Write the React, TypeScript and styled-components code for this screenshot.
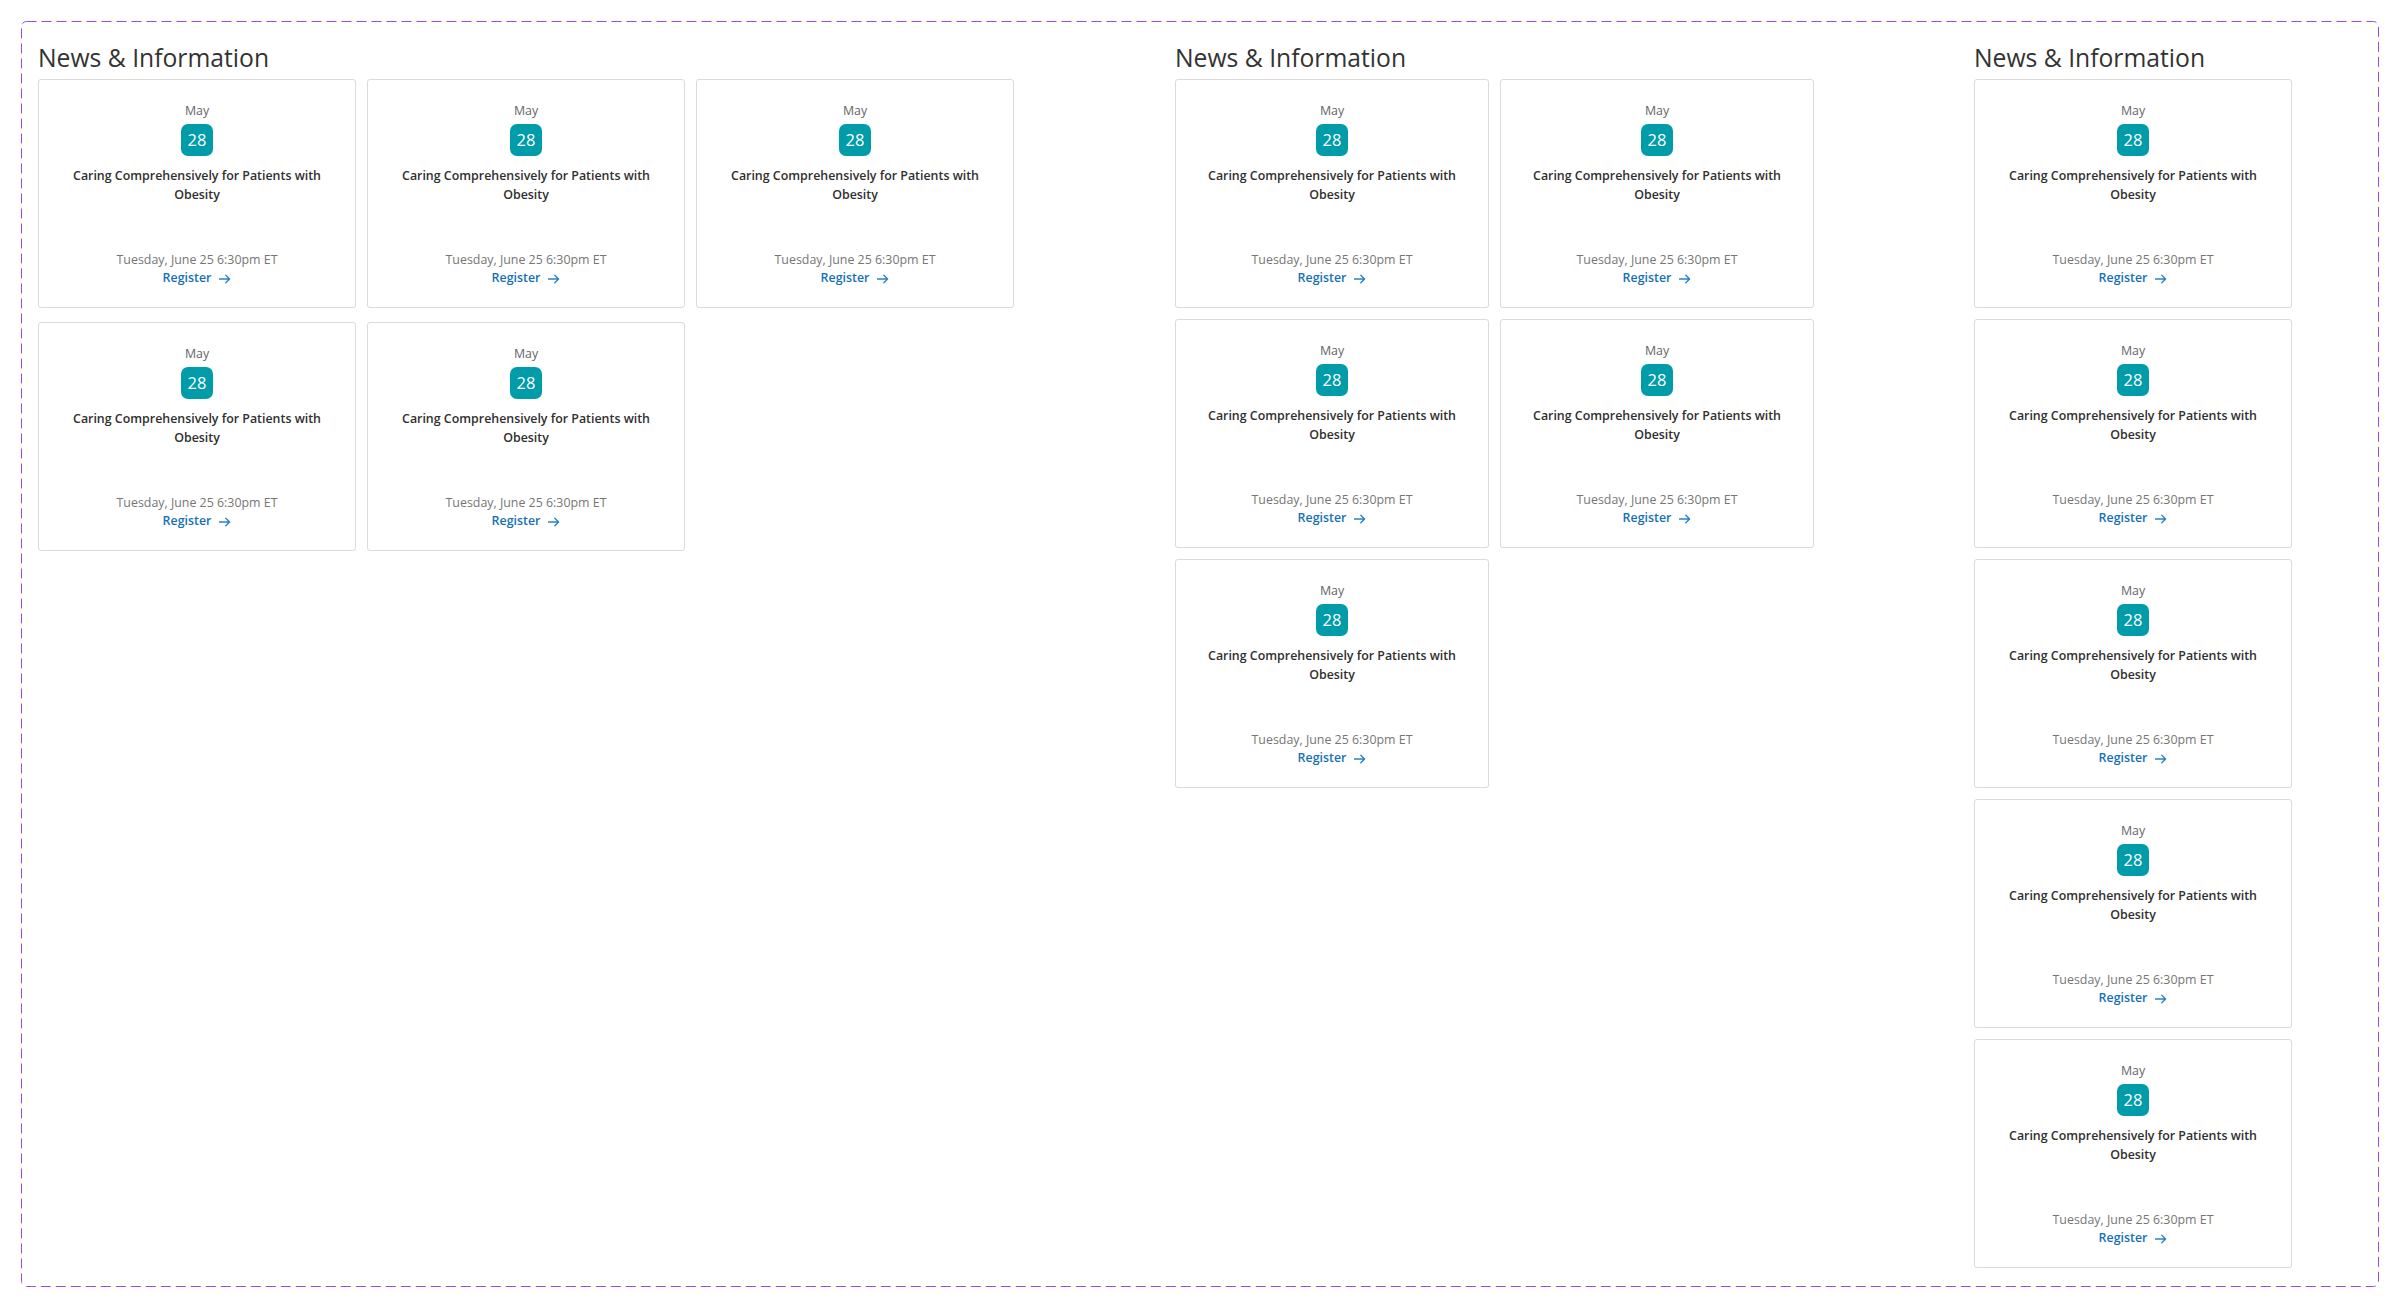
import React from "react";
import styled, { createGlobalStyle } from "styled-components";

interface IEvent {
  id: number;
  month: string;
  day: string;
  title: string;
  when: string;
}

interface ISection {
  id: string;
  width: number;
  cols: number;
  colWidth: number;
  colGap: number;
  rowGap: number;
  count: number;
}

const makeEvents = (count: number): IEvent[] =>
  Array.from({ length: count }, (_, i) => ({
    id: i,
    month: "May",
    day: "28",
    title: "Caring Comprehensively for Patients with Obesity",
    when: "Tuesday, June 25 6:30pm ET",
  }));

// three breakpoints of the same block, side by side
const sections: ISection[] = [
  { id: "desktop", width: 1137, cols: 3, colWidth: 318, colGap: 11, rowGap: 14, count: 5 },
  { id: "tablet", width: 799, cols: 2, colWidth: 314, colGap: 11, rowGap: 11, count: 5 },
  { id: "mobile", width: 318, cols: 1, colWidth: 318, colGap: 0, rowGap: 11, count: 5 },
];

const ArrowIcon = () => (
  <svg width="12" height="10" viewBox="0 0 12 10" fill="none">
    <path
      d="M0.5 5H10.5M6.8 1.2L10.6 5L6.8 8.8"
      stroke="currentColor"
      strokeWidth="1.3"
      strokeLinecap="round"
      strokeLinejoin="round"
    />
  </svg>
);

const EventCard = ({ event }: { event: IEvent }) => (
  <Card>
    <Month>{event.month}</Month>
    <DayBadge>{event.day}</DayBadge>
    <Title>{event.title}</Title>
    <Footer>
      <When>{event.when}</When>
      <RegisterLink href="#">
        Register
        <ArrowIcon />
      </RegisterLink>
    </Footer>
  </Card>
);

const App = () => {
  return (
    <>
      <GlobalStyle />
      <Page>
        <Frame>
          <DashedOutline aria-hidden="true">
            <rect x="0.5" y="0.5" rx="5" ry="5" />
          </DashedOutline>
          {sections.map((section) => (
            <Section key={section.id} $width={section.width}>
              <Heading>News &amp; Information</Heading>
              <CardGrid
                $cols={section.cols}
                $colWidth={section.colWidth}
                $colGap={section.colGap}
                $rowGap={section.rowGap}
              >
                {makeEvents(section.count).map((event) => (
                  <EventCard key={event.id} event={event} />
                ))}
              </CardGrid>
            </Section>
          ))}
        </Frame>
      </Page>
    </>
  );
};

const GlobalStyle = createGlobalStyle`
  html, body {
    margin: 0;
    background: #ffffff;
  }

  body {
    font-family: "Open Sans", "Noto Sans", Arial, sans-serif;
    -webkit-font-smoothing: antialiased;
  }
`;

export const Page = styled.div`
  padding: 21px;
`;

export const Frame = styled.div`
  position: relative;
  box-sizing: border-box;
  width: 2358px;
  height: 1266px;
  padding: 21px 17px;
  display: flex;
  align-items: flex-start;
`;

export const DashedOutline = styled.svg`
  position: absolute;
  inset: 0;
  width: 100%;
  height: 100%;
  pointer-events: none;

  rect {
    width: calc(100% - 1px);
    height: calc(100% - 1px);
    fill: none;
    stroke: #9747ff;
    stroke-width: 1;
    stroke-dasharray: 10 5;
  }
`;

export const Section = styled.section<{ $width: number }>`
  flex: 0 0 ${(props) => props.$width}px;
`;

export const Heading = styled.h2`
  margin: 0 0 5px;
  font-size: 24.7px;
  line-height: 32px;
  font-weight: 400;
  color: #333333;
  white-space: nowrap;
`;

export const CardGrid = styled.div<{
  $cols: number;
  $colWidth: number;
  $colGap: number;
  $rowGap: number;
}>`
  display: grid;
  grid-template-columns: repeat(${(props) => props.$cols}, ${(props) => props.$colWidth}px);
  column-gap: ${(props) => props.$colGap}px;
  row-gap: ${(props) => props.$rowGap}px;
`;

export const Card = styled.article`
  box-sizing: border-box;
  height: 229px;
  padding: 22px 14px 20px;
  border: 1px solid #dcdadb;
  border-radius: 3px;
  background: #ffffff;
  display: flex;
  flex-direction: column;
  align-items: center;
  text-align: center;
`;

export const Month = styled.div`
  font-size: 12.4px;
  line-height: 18px;
  color: #666666;
`;

export const DayBadge = styled.div`
  margin-top: 4px;
  width: 32px;
  height: 32px;
  border-radius: 7px;
  background: #009ca9;
  color: #ffffff;
  font-size: 16.5px;
  line-height: 32px;
  text-align: center;
`;

export const Title = styled.h3`
  margin: 11px 0 0;
  font-size: 12.4px;
  line-height: 18.5px;
  font-weight: 600;
  color: #2f2f2f;
`;

export const Footer = styled.div`
  margin-top: auto;
  display: flex;
  flex-direction: column;
  align-items: center;
`;

export const When = styled.div`
  font-size: 12.4px;
  line-height: 18px;
  color: #767676;
`;

export const RegisterLink = styled.a`
  display: inline-flex;
  align-items: center;
  gap: 8px;
  font-size: 12.4px;
  line-height: 18px;
  font-weight: 600;
  color: #1570b5;
  text-decoration: none;

  svg {
    color: #2a82c4;
    margin-top: 1px;
  }
`;

export default App;
